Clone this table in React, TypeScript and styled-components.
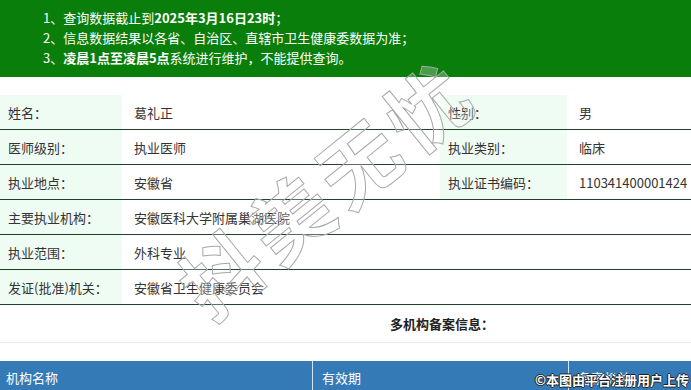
import React from "react";
import styled, { createGlobalStyle } from "styled-components";

const GlobalStyle = createGlobalStyle`
  html, body {
    margin: 0;
    padding: 0;
    background: #ffffff;
  }
  body {
    font-family: "Noto Sans CJK SC", "Noto Sans", sans-serif;
  }
`;

// page frame
const Page = styled.div`
  position: relative;
  width: 691px;
  height: 390px;
  overflow: hidden;
  background: #ffffff;
  font-size: 13px;
  color: #333333;
`;

const Notice = styled.ul`
  list-style: none;
  margin: 0;
  padding: 8px 0 0 43px;
  height: 77px;
  box-sizing: border-box;
  background-color: #0a7e0a;
  color: #ffffff;
`;

const NoticeLine = styled.li`
  line-height: 20px;
  font-size: 13px;
  white-space: nowrap;
`;

const Strong = styled.b`
  font-weight: 700;
`;

const InfoTable = styled.div`
  margin-top: 18px;
  display: grid;
  grid-template-columns: 122px 318px 127px 1fr;
`;

const Cell = styled.div<{ $label?: boolean; $span?: number }>`
  height: 34px;
  border-bottom: 1px solid #23402f;
  display: flex;
  align-items: center;
  padding-left: ${(p) => (p.$label ? "8px" : "12px")};
  background-color: ${(p) => (p.$label ? "#effcf4" : "#ffffff")};
  grid-column: span ${(p) => p.$span ?? 1};
  white-space: nowrap;
`;

const MultiTitle = styled.div`
  height: 38px;
  box-sizing: border-box;
  border-bottom: 1px solid #e6e9e8;
  display: flex;
  align-items: center;
  padding-left: 390px;
  font-weight: 700;
  color: #222222;
`;

const OrgHeader = styled.div`
  margin-top: 18px;
  display: grid;
  grid-template-columns: 312px 256px 1fr;
  background-color: #337ab7;
  color: #ffffff;
`;

const HeadCell = styled.div<{ $first?: boolean }>`
  height: 32px;
  display: flex;
  align-items: center;
  padding-left: ${(p) => (p.$first ? "6px" : "9px")};
  border-left: ${(p) => (p.$first ? "none" : "1px solid #d6e4f0")};
  font-size: 13px;
`;

const Watermark = styled.div`
  position: absolute;
  left: 322px;
  top: 188px;
  transform: translate(-50%, -50%) rotate(-39deg);
  font-size: 80px;
  line-height: 1;
  font-weight: 700;
  letter-spacing: 8px;
  padding-left: 8px;
  color: rgba(255, 255, 255, 0.25);
  -webkit-text-stroke: 1px #a8a8a8;
  white-space: nowrap;
  pointer-events: none;
`;

const UploadMark = styled.div`
  position: absolute;
  right: 2px;
  bottom: 1px;
  font-size: 13px;
  font-weight: 700;
  color: #ffffff;
  text-shadow: -1px 0 #222, 1px 0 #222, 0 -1px #222, 0 1px #222;
  white-space: nowrap;
`;

const rows: { label: string; value: string; label2?: string; value2?: string }[] = [
  { label: "姓名：", value: "葛礼正", label2: "性别：", value2: "男" },
  { label: "医师级别：", value: "执业医师", label2: "执业类别：", value2: "临床" },
  { label: "执业地点：", value: "安徽省", label2: "执业证书编码：", value2: "110341400001424" },
  { label: "主要执业机构：", value: "安徽医科大学附属巢湖医院" },
  { label: "执业范围：", value: "外科专业" },
  { label: "发证(批准)机关：", value: "安徽省卫生健康委员会" },
];

const App: React.FC = () => {
  return (
    <Page>
      <GlobalStyle />
      <Notice>
        <NoticeLine>
          1、查询数据截止到<Strong>2025年3月16日23时</Strong>；
        </NoticeLine>
        <NoticeLine>2、信息数据结果以各省、自治区、直辖市卫生健康委数据为准；</NoticeLine>
        <NoticeLine>
          3、<Strong>凌晨1点至凌晨5点</Strong>系统进行维护，不能提供查询。
        </NoticeLine>
      </Notice>

      <InfoTable>
        {rows.map((r) =>
          r.label2 ? (
            <React.Fragment key={r.label}>
              <Cell $label>{r.label}</Cell>
              <Cell>{r.value}</Cell>
              <Cell $label>{r.label2}</Cell>
              <Cell>{r.value2}</Cell>
            </React.Fragment>
          ) : (
            <React.Fragment key={r.label}>
              <Cell $label>{r.label}</Cell>
              <Cell $span={3}>{r.value}</Cell>
            </React.Fragment>
          )
        )}
      </InfoTable>

      <MultiTitle>多机构备案信息：</MultiTitle>

      <OrgHeader>
        <HeadCell $first>机构名称</HeadCell>
        <HeadCell>有效期</HeadCell>
        <HeadCell>备案机关</HeadCell>
      </OrgHeader>

      <Watermark>抖美无忧</Watermark>
      <UploadMark>©本图由平台注册用户上传</UploadMark>
    </Page>
  );
};

export default App;
